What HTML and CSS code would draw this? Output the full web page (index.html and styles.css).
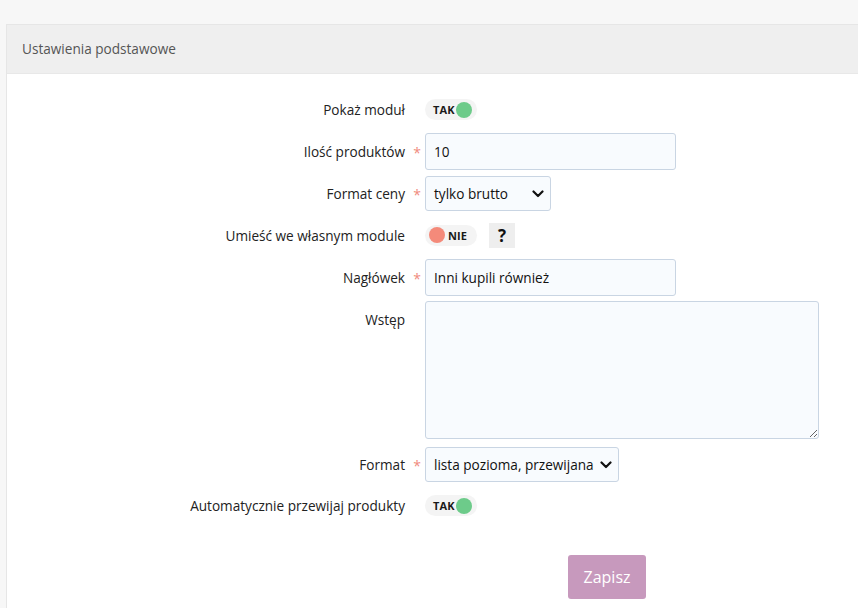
FILE: index.html
```html
<!DOCTYPE html>
<html lang="pl">
<head>
<meta charset="utf-8">
<title>Ustawienia podstawowe</title>
<link rel="stylesheet" href="styles.css">
</head>
<body>
<div class="page">
  <section class="card">
    <header class="card-head">Ustawienia podstawowe</header>
    <div class="card-body">
      <form class="form">
        <div class="row row-switch">
          <label class="lbl">Pokaż moduł</label>
          <span class="req"></span>
          <div class="ctl"><span class="switch on"><span class="sw-text">TAK</span><span class="knob"></span></span></div>
        </div>
        <div class="row">
          <label class="lbl">Ilość produktów</label>
          <span class="req">*</span>
          <div class="ctl"><input class="input w-md" type="text" value="10"></div>
        </div>
        <div class="row">
          <label class="lbl">Format ceny</label>
          <span class="req">*</span>
          <div class="ctl"><div class="select w-sm"><span>tylko brutto</span><svg class="chev" viewBox="0 0 12 8" width="12" height="8"><path d="M1.5 1.5 L6 6 L10.5 1.5" fill="none" stroke="#111" stroke-width="2.2" stroke-linecap="round" stroke-linejoin="round"/></svg></div></div>
        </div>
        <div class="row row-help">
          <label class="lbl">Umieść we własnym module</label>
          <span class="req"></span>
          <div class="ctl"><span class="switch off"><span class="knob"></span><span class="sw-text">NIE</span></span><span class="help">?</span></div>
        </div>
        <div class="row">
          <label class="lbl">Nagłówek</label>
          <span class="req">*</span>
          <div class="ctl"><input class="input w-md" type="text" value="Inni kupili również"></div>
        </div>
        <div class="row row-top">
          <label class="lbl">Wstęp</label>
          <span class="req"></span>
          <div class="ctl"><textarea class="area"></textarea></div>
        </div>
        <div class="row row-after-area">
          <label class="lbl">Format</label>
          <span class="req">*</span>
          <div class="ctl"><div class="select w-lg"><span>lista pozioma, przewijana</span><svg class="chev" viewBox="0 0 12 8" width="12" height="8"><path d="M1.5 1.5 L6 6 L10.5 1.5" fill="none" stroke="#111" stroke-width="2.2" stroke-linecap="round" stroke-linejoin="round"/></svg></div></div>
        </div>
        <div class="row row-switch">
          <label class="lbl">Automatycznie przewijaj produkty</label>
          <span class="req"></span>
          <div class="ctl"><span class="switch on"><span class="sw-text">TAK</span><span class="knob"></span></span></div>
        </div>
        <div class="actions">
          <button type="button" class="btn">Zapisz</button>
        </div>
      </form>
    </div>
  </section>
</div>
</body>
</html>
```
FILE: styles.css
```css
html, body {
  margin: 0;
  padding: 0;
  background: #f7f7f7;
  font-family: "Open Sans", "Noto Sans", sans-serif;
  color: #222;
  overflow: hidden;
}
.page {
  box-sizing: border-box;
  padding: 24px 0 0 6px;
  height: 608px;
  overflow: hidden;
}
.card {
  box-sizing: border-box;
  background: #fff;
  border: 1px solid #e6e6e6;
  border-right: none;
  border-bottom: none;
  height: 584px;
  overflow: hidden;
}
.card-head {
  background: #efefef;
  height: 48px;
  line-height: 47px;
  padding-left: 15px;
  font-size: 13.6px;
  color: #555;
  border-bottom: 1px solid #e8e8e8;
}
.card-body {
  padding-top: 18px;
}
.form {
  display: flex;
  flex-direction: column;
  gap: 6px;
}
.row {
  display: grid;
  grid-template-columns: 398px 20px 1fr;
  align-items: center;
}
.row-switch { height: 35px; }
.row-help { height: 36px; }
.row-top { align-items: start; margin-top: -1px; }
.row-top .lbl { padding-top: 9px; }
.row-after-area { margin-top: 2px; }
.lbl {
  text-align: right;
  font-size: 13.6px;
  color: #222;
  white-space: nowrap;
}
.req {
  color: #f08a7e;
  font-size: 14px;
  text-align: center;
  padding-left: 4px;
  padding-top: 2px;
}
.ctl {
  display: flex;
  align-items: center;
  gap: 12px;
}
.input, .select, .area {
  box-sizing: border-box;
  background: #f8fbfe;
  border: 1px solid #c9d5e3;
  border-radius: 3px;
  font-family: inherit;
  font-size: 13.6px;
  color: #111;
}
.input {
  height: 37px;
  padding: 0 8px;
  outline: none;
}
.w-md { width: 251px; }
.select {
  height: 35px;
  display: flex;
  align-items: center;
  justify-content: space-between;
  padding: 0 6px 0 8px;
}
.w-sm { width: 126px; }
.w-lg { width: 194px; }
.chev { flex: none; }
.area {
  width: 394px;
  height: 138px;
  resize: both;
  display: block;
  outline: none;
}
.switch {
  box-sizing: border-box;
  display: inline-flex;
  align-items: center;
  width: 52px;
  height: 21px;
  border-radius: 11px;
  background: #f4f4f4;
  padding: 0 4px 0 8px;
  gap: 1px;
}
.switch.off {
  padding: 0 4px;
  gap: 3px;
}
.sw-text {
  font-size: 11px;
  font-weight: 700;
  color: #1a1a1a;
  letter-spacing: 0.1px;
}
.knob {
  width: 16px;
  height: 16px;
  border-radius: 50%;
  flex: none;
}
.switch.on .knob { background: #6dcb8a; }
.switch.off .knob { background: #f48a7a; }
.help {
  width: 26px;
  height: 25px;
  background: #eeeeee;
  font-weight: 700;
  font-size: 17px;
  display: inline-flex;
  align-items: center;
  justify-content: center;
  color: #111;
}
.actions {
  display: flex;
  padding-left: 561px;
  margin-top: 26px;
}
.btn {
  width: 78px;
  height: 44px;
  background: #c799bd;
  border: none;
  border-radius: 3px;
  color: #fff;
  font-family: inherit;
  font-size: 16px;
}
```
